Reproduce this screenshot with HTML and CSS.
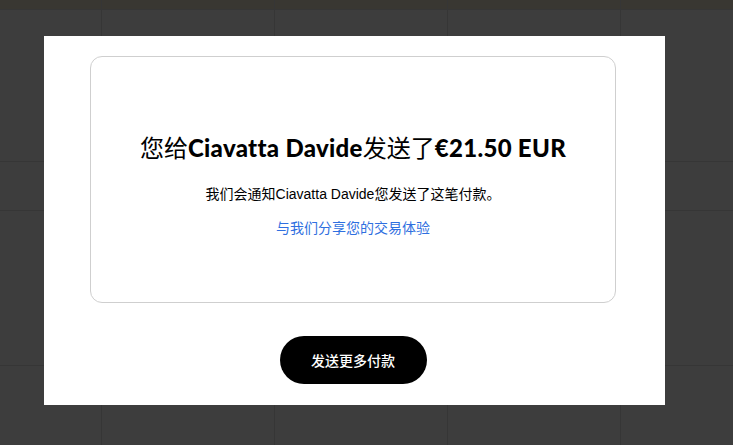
FILE: index.html
```html
<!DOCTYPE html>
<html lang="zh">
<head>
<meta charset="utf-8">
<link rel="stylesheet" href="styles.css">
</head>
<body>
<div class="page">
  <div class="bg-grid">
    <div class="row head"><div></div><div></div><div></div><div></div><div></div></div>
    <div class="row r1"><div></div><div></div><div></div><div></div><div></div></div>
    <div class="row r2"><div></div><div></div><div></div><div></div><div></div></div>
    <div class="row r3"><div></div><div></div><div></div><div></div><div></div></div>
    <div class="row r4"><div></div><div></div><div></div><div></div><div></div></div>
  </div>
  <div class="modal">
    <div class="card">
      <h1 class="title"><span class="cjk">您给</span><b>Ciavatta Davide</b><span class="cjk">发送了</span><b>€21.50 EUR</b></h1>
      <p class="note">我们会通知Ciavatta Davide您发送了这笔付款。</p>
      <a class="link" href="#">与我们分享您的交易体验</a>
    </div>
    <div class="actions">
      <button class="btn">发送更多付款</button>
    </div>
  </div>
</div>
</body>
</html>
```
FILE: styles.css
```css
html, body {
  margin: 0;
  padding: 0;
}
body {
  background: #3d3d3d;
  font-family: "Liberation Sans", "Noto Sans CJK SC", sans-serif;
  width: 733px;
  height: 445px;
  overflow: hidden;
}
.page {
  position: relative;
  width: 733px;
  height: 445px;
}
.bg-grid {
  display: flex;
  flex-direction: column;
  height: 445px;
}
.row {
  display: grid;
  grid-template-columns: 102px 173px 173px 173px 1fr;
  border-bottom: 1px solid #363636;
}
.row > div {
  border-right: 1px solid #363636;
}
.row > div:last-child {
  border-right: none;
}
.head { height: 9px; background: #393732; }
.r1 { height: 151px; }
.r2 { height: 48px; }
.r3 { height: 154px; }
.r4 { flex: 1; border-bottom: none; }

.modal {
  position: absolute;
  left: 44px;
  top: 36px;
  width: 621px;
  height: 369px;
  background: #fff;
  box-sizing: border-box;
  padding: 20px 49px 0 46px;
  display: flex;
  flex-direction: column;
}
.card {
  height: 247px;
  box-sizing: border-box;
  border: 1px solid #cfcfcf;
  border-radius: 12px;
  display: flex;
  flex-direction: column;
  align-items: center;
  padding-top: 74px;
}
.title {
  margin: 0;
  font-family: "Lato", "Noto Sans CJK SC", sans-serif;
  font-size: 24px;
  line-height: 32px;
  font-weight: 400;
  color: #000;
  white-space: nowrap;
}
.title .cjk {
  font-family: "Noto Sans CJK SC", sans-serif;
  font-weight: 400;
}
.title b {
  font-weight: 900;
  letter-spacing: 0.3px;
}
.note {
  margin: 20px 0 0;
  font-size: 14px;
  line-height: 20px;
  color: #000;
}
.link {
  margin-top: 14px;
  font-size: 14px;
  line-height: 20px;
  color: #2f6fe0;
  text-decoration: none;
}
.actions {
  display: flex;
  justify-content: center;
  margin-top: 33px;
}
.btn {
  width: 147px;
  height: 48px;
  border: none;
  border-radius: 24px;
  background: #000;
  color: #fff;
  font-family: "Noto Sans CJK SC", sans-serif;
  font-size: 14px;
  font-weight: 500;
  padding: 0;
}
```
